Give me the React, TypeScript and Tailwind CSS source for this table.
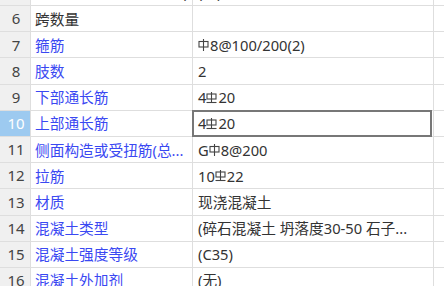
import React from 'react';

type Piece = string;

interface Row {
  no: number;
  name: string;
  blue: boolean;
  value: Piece[];
}

// 一级钢 (HPB300) glyph
function SymA() {
  return (
    <svg width="11" height="12" viewBox="0 0 11 12" className="inline-block mr-[1px] -mt-[3px] align-middle">
      <rect x="1" y="2.5" width="9" height="5.5" fill="none" stroke="#444" strokeWidth="1.1" />
      <line x1="5.5" y1="0" x2="5.5" y2="12" stroke="#444" strokeWidth="1.1" />
    </svg>
  );
}

// 三级钢 (HRB400) glyph
function SymC() {
  return (
    <svg width="11" height="12" viewBox="0 0 11 12" className="inline-block mr-[1px] -mt-[3px] align-middle">
      <rect x="1" y="2" width="9" height="5" fill="none" stroke="#444" strokeWidth="1.1" />
      <line x1="5.5" y1="0" x2="5.5" y2="10.5" stroke="#444" strokeWidth="1.1" />
      <line x1="0.5" y1="10.5" x2="10.5" y2="10.5" stroke="#444" strokeWidth="1.1" />
    </svg>
  );
}

const rows: Row[] = [
  { no: 5, name: '侧面纵筋是否参与受扭(...', blue: false, value: ['(是)'] },
  { no: 6, name: '跨数量', blue: false, value: [] },
  { no: 7, name: '箍筋', blue: true, value: ['A', '8@100/200(2)'] },
  { no: 8, name: '肢数', blue: true, value: ['2'] },
  { no: 9, name: '下部通长筋', blue: true, value: ['4', 'C', '20'] },
  { no: 10, name: '上部通长筋', blue: true, value: ['4', 'C', '20'] },
  { no: 11, name: '侧面构造或受扭筋(总...', blue: true, value: ['G', 'A', '8@200'] },
  { no: 12, name: '拉筋', blue: true, value: ['10', 'C', '22'] },
  { no: 13, name: '材质', blue: true, value: ['现浇混凝土'] },
  { no: 14, name: '混凝土类型', blue: true, value: ['(碎石混凝土 坍落度30-50 石子...'] },
  { no: 15, name: '混凝土强度等级', blue: true, value: ['(C35)'] },
  { no: 16, name: '混凝土外加剂', blue: true, value: ['(无)'] },
];

export default function App() {
  return (
    <div
      className="w-[444px] h-[286px] overflow-hidden bg-white text-[14.7px] text-[#333]"
      style={{ fontFamily: '"Noto Sans", "Noto Sans CJK SC", sans-serif' }}
    >
      <div className="-mt-[20.2px]">
        {rows.map((r) => {
          const selected = r.no === 10;
          return (
            <div key={r.no} className="flex h-[26.2px] border-b border-[#dedede]">
              <div
                className={`w-[31px] shrink-0 flex items-center justify-center pl-[2px] border-r border-[#dedede] text-[15px] ${
                  selected ? 'bg-[#9dcaf0] text-white' : 'bg-[#f0f0f0] text-[#444]'
                }`}
              >
                {r.no}
              </div>
              <div
                className={`w-[162px] shrink-0 flex items-center pl-[4px] border-r border-[#dedede] overflow-hidden whitespace-nowrap ${
                  r.blue ? 'text-[#3a48f2]' : 'text-[#333]'
                }`}
              >
                {r.name}
              </div>
              <div className="relative w-[241px] shrink-0 flex items-center pl-[5px] border-r border-[#dedede] whitespace-nowrap">
                <span>
                  {r.value.map((p, i) =>
                    p === 'A' ? <SymA key={i} /> : p === 'C' ? <SymC key={i} /> : <span key={i}>{p}</span>
                  )}
                </span>
                {selected && (
                  <div className="absolute -top-[1px] -left-[1px] right-[1px] -bottom-[1px] border-2 border-[#777]" />
                )}
              </div>
              <div className="flex-1" />
            </div>
          );
        })}
      </div>
    </div>
  );
}
